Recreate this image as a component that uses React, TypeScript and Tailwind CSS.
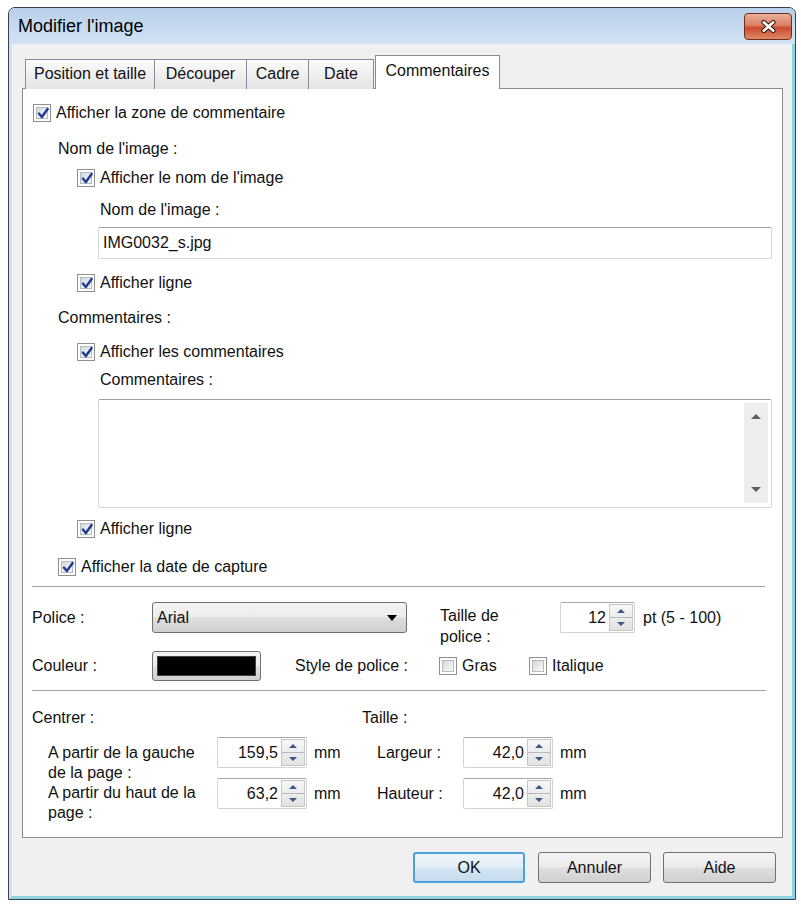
import React from 'react';

// Windows 7 style "Modifier l'image" dialog, Commentaires tab

function Check({ checked = false }: { checked?: boolean }) {
  return (
    <span className="flex h-[18px] w-[18px] shrink-0 items-center justify-center border border-[#8e8f8f] bg-white p-[2px]">
      <span className="relative flex h-full w-full items-center justify-center border border-[#b7bbc0] bg-linear-to-br from-[#d5d8dc] to-[#fbfbfb]">
        {checked && (
          <svg viewBox="0 0 12 12" className="absolute left-[-1px] top-[-2px] h-[14px] w-[14px]">
            <path d="M2.5 6.5 L5 9.5 L10 2.5" fill="none" stroke="#1f3c99" strokeWidth="2.1" strokeLinecap="round" strokeLinejoin="round" />
          </svg>
        )}
      </span>
    </span>
  );
}

function Spin({ value, w }: { value: string; w: string }) {
  return (
    <div className={`flex h-[31px] ${w} rounded-[2px] border border-[#d0d4d9] border-t-[#a3a7ad] bg-white`}>
      <div className="flex flex-1 items-center justify-end pr-[3px]">{value}</div>
      <div className="my-[1px] mr-[1px] flex w-[24px] flex-col border border-[#c3c6ca] bg-linear-to-b from-[#f7f7f7] to-[#e2e2e2]">
        <div className="flex flex-1 items-center justify-center border-b border-[#b4b7bb]">
          <svg viewBox="0 0 8 4" className="h-[4px] w-[8px]">
            <path d="M0 4 L4 0 L8 4 Z" fill="#3f5788" />
          </svg>
        </div>
        <div className="flex flex-1 items-center justify-center">
          <svg viewBox="0 0 8 4" className="h-[4px] w-[8px]">
            <path d="M0 0 L4 4 L8 0 Z" fill="#3f5788" />
          </svg>
        </div>
      </div>
    </div>
  );
}

const btnFace =
  'bg-[linear-gradient(to_bottom,#f3f3f3_0%,#ececec_48%,#dedede_52%,#d0d0d0_100%)]';

export default function App() {
  return (
    <div className="min-h-[906px] w-[801px] bg-white pl-[8px] pt-[7px] font-['Liberation_Sans',Arial,sans-serif] text-[16px] text-[#111]">
      <div className="flex h-[893px] w-[788px] flex-col overflow-hidden rounded-t-[7px] border border-[#36414f] bg-[#c6d9ee]">
        {/* title bar */}
        <div className="flex h-[36px] shrink-0 items-start justify-between bg-linear-to-b from-[#b9d0ea] to-[#d2e2f3]">
          <div className="flex h-full items-center pl-[9px] text-[18px] text-black">Modifier l'image</div>
          <div className="mr-[3px] mt-[5px] flex h-[27px] w-[48px] items-center justify-center rounded-[4px] border border-[#6e2e1e] bg-[linear-gradient(to_bottom,#eab09b_0%,#db8064_45%,#c94a2c_55%,#e08a66_100%)]">
            <svg viewBox="0 0 16 12" className="h-[13px] w-[17px]">
              <path d="M3.5 2 L12.5 10 M12.5 2 L3.5 10" stroke="#3a1a12" strokeWidth="4.4" strokeLinecap="round" />
              <path d="M3.5 2 L12.5 10 M12.5 2 L3.5 10" stroke="#ffffff" strokeWidth="2.4" strokeLinecap="round" />
            </svg>
          </div>
        </div>

        {/* client area */}
        <div className="flex flex-1 flex-col border-b-[3px] border-l-[3px] border-r-[3px] border-b-[#8fd4de] border-l-[#cfe0f2] border-r-[#8fd4de] bg-[#f0f0f0] pl-[10px] pr-[9px] pt-[11px]">
          {/* tabs */}
          <div className="relative z-10 -mb-px flex h-[34px] items-end pl-[3px]">
            <div className="flex h-[30px] w-[129px] items-center justify-center border-l border-t border-[#898c95] bg-linear-to-b from-[#fbfbfb] to-[#e4e4e4] pb-px">Position et taille</div>
            <div className="flex h-[30px] w-[92px] items-center justify-center border-l border-t border-[#898c95] bg-linear-to-b from-[#fbfbfb] to-[#e4e4e4] pb-px">Découper</div>
            <div className="flex h-[30px] w-[62px] items-center justify-center border-l border-t border-[#898c95] bg-linear-to-b from-[#fbfbfb] to-[#e4e4e4] pb-px">Cadre</div>
            <div className="flex h-[30px] w-[66px] items-center justify-center border-l border-r border-t border-[#898c95] bg-linear-to-b from-[#fbfbfb] to-[#e4e4e4] pb-px">Date</div>
            <div className="ml-[1px] flex h-[34px] w-[125px] items-center justify-center border-l border-r border-t border-[#898c95] bg-white pb-[3px]">Commentaires</div>
          </div>

          {/* panel */}
          <div className="flex h-[750px] flex-col border border-[#898c95] bg-white">
            <div className="mt-[14px] flex h-[20px] items-center gap-[5px] pl-[10px]">
              <Check checked />
              <span>Afficher la zone de commentaire</span>
            </div>
            <div className="mt-[16px] flex h-[20px] items-center pl-[35px]">Nom de l'image :</div>
            <div className="mt-[9px] flex h-[20px] items-center gap-[5px] pl-[54px]">
              <Check checked />
              <span>Afficher le nom de l'image</span>
            </div>
            <div className="mt-[12px] flex h-[20px] items-center pl-[77px]">Nom de l'image :</div>
            <div className="ml-[75px] mr-[10px] mt-[7px] flex h-[32px] items-center rounded-[2px] border border-[#d3d7dc] border-t-[#9ea2a8] pl-[4px]">IMG0032_s.jpg</div>
            <div className="mt-[14px] flex h-[20px] items-center gap-[5px] pl-[54px]">
              <Check checked />
              <span>Afficher ligne</span>
            </div>
            <div className="mt-[15px] flex h-[20px] items-center pl-[35px]">Commentaires :</div>
            <div className="mt-[14px] flex h-[20px] items-center gap-[5px] pl-[54px]">
              <Check checked />
              <span>Afficher les commentaires</span>
            </div>
            <div className="mt-[8px] flex h-[20px] items-center pl-[77px]">Commentaires :</div>
            <div className="ml-[75px] mr-[10px] mt-[9px] flex h-[109px] justify-end rounded-[2px] border border-[#d3d7dc] border-t-[#9ea2a8]">
              <div className="mb-[4px] mr-[3px] mt-[3px] flex w-[24px] flex-col items-center justify-between bg-[#eeeeee] py-[11px]">
                <svg viewBox="0 0 10 5" className="h-[5px] w-[10px]">
                  <path d="M0 5 L5 0 L10 5 Z" fill="#606060" />
                </svg>
                <svg viewBox="0 0 10 5" className="h-[5px] w-[10px]">
                  <path d="M0 0 L5 5 L10 0 Z" fill="#606060" />
                </svg>
              </div>
            </div>
            <div className="mt-[11px] flex h-[20px] items-center gap-[5px] pl-[54px]">
              <Check checked />
              <span>Afficher ligne</span>
            </div>
            <div className="mt-[18px] flex h-[20px] items-center gap-[5px] pl-[35px]">
              <Check checked />
              <span>Afficher la date de capture</span>
            </div>
            <div className="ml-[9px] mr-[17px] mt-[9px] h-px bg-[#a0a0a0]" />

            {/* font settings */}
            <div className="mt-[15px] flex h-[31px] items-start pl-[9px]">
              <div className="flex h-[31px] w-[120px] items-center">Police :</div>
              <div className={`flex h-[31px] w-[255px] items-center justify-between rounded-[3px] border border-[#707070] pl-[4px] pr-[9px] ${btnFace}`}>
                <span>Arial</span>
                <svg viewBox="0 0 10 6" className="h-[6px] w-[10px]">
                  <path d="M0 0 L10 0 L5 6 Z" fill="#000" />
                </svg>
              </div>
              <div className="ml-[33px] w-[120px] whitespace-nowrap pt-[3px] leading-[21px]">
                Taille de
                <br />
                police :
              </div>
              <Spin value="12" w="w-[75px]" />
              <div className="ml-[8px] flex h-[31px] items-center">pt (5 - 100)</div>
            </div>
            <div className="mt-[18px] flex h-[30px] items-center pl-[9px]">
              <div className="w-[120px]">Couleur :</div>
              <div className={`h-[30px] w-[109px] rounded-[3px] border border-[#707070] px-[4px] py-[4px] ${btnFace}`}>
                <div className="h-full w-full border border-[#404040] bg-black" />
              </div>
              <div className="ml-[34px] w-[144px]">Style de police :</div>
              <div className="flex w-[90px] items-center gap-[5px]">
                <Check />
                <span>Gras</span>
              </div>
              <div className="flex items-center gap-[5px]">
                <Check />
                <span>Italique</span>
              </div>
            </div>
            <div className="ml-[9px] mr-[16px] mt-[9px] h-px bg-[#a0a0a0]" />

            {/* position & size */}
            <div className="mt-[17px] flex h-[20px] items-center pl-[9px]">
              <div className="w-[330px]">Centrer :</div>
              <div>Taille :</div>
            </div>
            <div className="mt-[9px] flex h-[30px] items-start pl-[25px]">
              <div className="w-[169px] whitespace-nowrap pt-[6px] leading-[20px]">
                A partir de la gauche
                <br />
                de la page :
              </div>
              <Spin value="159,5" w="w-[90px]" />
              <div className="ml-[7px] flex h-[31px] w-[63px] items-center">mm</div>
              <div className="flex h-[31px] w-[86px] items-center">Largeur :</div>
              <Spin value="42,0" w="w-[90px]" />
              <div className="ml-[7px] flex h-[31px] items-center">mm</div>
            </div>
            <div className="mt-[11px] flex h-[31px] items-start pl-[25px]">
              <div className="w-[169px] whitespace-nowrap pt-[5px] leading-[20px]">
                A partir du haut de la
                <br />
                page :
              </div>
              <Spin value="63,2" w="w-[90px]" />
              <div className="ml-[7px] flex h-[31px] w-[63px] items-center">mm</div>
              <div className="flex h-[31px] w-[86px] items-center">Hauteur :</div>
              <Spin value="42,0" w="w-[90px]" />
              <div className="ml-[7px] flex h-[31px] items-center">mm</div>
            </div>
          </div>

          {/* dialog buttons */}
          <div className="mt-[14px] flex justify-end pr-[7px]">
            <div className="flex h-[31px] w-[112px] items-center justify-center rounded-[3px] border-2 border-[#4aa3dc] bg-[linear-gradient(to_bottom,#eef6fb_0%,#e3eef7_48%,#d3e4f1_52%,#c6dcee_100%)]">
              OK
            </div>
            <div className={`ml-[13px] flex h-[31px] w-[113px] items-center justify-center rounded-[3px] border border-[#707070] ${btnFace}`}>
              Annuler
            </div>
            <div className={`ml-[12px] flex h-[31px] w-[113px] items-center justify-center rounded-[3px] border border-[#707070] ${btnFace}`}>
              Aide
            </div>
          </div>
        </div>
      </div>
    </div>
  );
}
